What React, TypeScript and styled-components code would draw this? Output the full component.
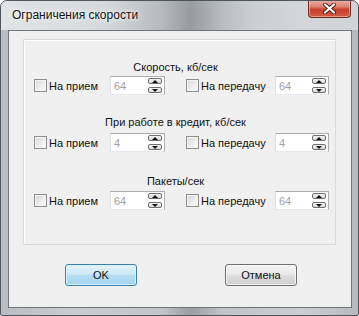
import styled, { createGlobalStyle } from "styled-components";

const GlobalStyle = createGlobalStyle`
  html, body {
    margin: 0;
    padding: 0;
    background: #ffffff;
  }
  body {
    font-family: "Liberation Sans", Arial, sans-serif;
  }
`;

const Window = styled.div`
  width: 359px;
  height: 316px;
  box-sizing: border-box;
  display: flex;
  flex-direction: column;
  border: 1px solid #4f555c;
  border-radius: 7px 7px 2px 2px;
  background: linear-gradient(
    90deg,
    #b9bdc1 0%,
    #c9ccd0 20%,
    #c2c5c9 45%,
    #9a9ea2 53%,
    #c0c3c7 62%,
    #cbced2 85%,
    #b6babe 100%
  );
  overflow: hidden;
`;

const TitleBar = styled.div`
  height: 29px;
  flex-shrink: 0;
  display: flex;
  align-items: flex-start;
  justify-content: space-between;
  background: linear-gradient(
    90deg,
    rgba(235, 238, 241, 0.8) 0%,
    rgba(222, 225, 228, 0.6) 30%,
    rgba(150, 154, 158, 0.6) 53%,
    rgba(210, 213, 216, 0.5) 70%,
    rgba(226, 229, 232, 0.6) 100%
  );
`;

const Title = styled.div`
  font-family: "Liberation Sans", Arial, sans-serif;
  font-size: 12px;
  color: #111;
  padding: 7px 0 0 11px;
  text-shadow: 0 0 6px #ffffff, 0 0 3px #ffffff;
`;

const CloseButton = styled.div`
  width: 43px;
  height: 18px;
  margin-right: 7px;
  margin-top: -1px;
  box-sizing: border-box;
  border: 1px solid #6e2a20;
  border-top: none;
  border-radius: 0 0 4px 4px;
  background: linear-gradient(
    180deg,
    #eab0a2 0%,
    #dc8070 40%,
    #c8412c 55%,
    #cf5a3e 100%
  );
  box-shadow: inset 0 0 0 1px rgba(255, 220, 210, 0.5);
  display: flex;
  align-items: center;
  justify-content: center;
`;

const Client = styled.div`
  flex: 1;
  margin: 0 6px 7px 7px;
  border: 1px solid #6f757b;
  background: #f0f0f0;
  display: flex;
  flex-direction: column;
`;

const Group = styled.div`
  margin: 8px 15px 0 14px;
  height: 206px;
  box-sizing: border-box;
  border: 1px solid #d9dcdf;
  box-shadow: inset 1px 1px 0 #ffffff;
  display: flex;
  flex-direction: column;
`;

const Section = styled.div<{ $top: number; $gap: number }>`
  margin-top: ${(p) => p.$top}px;
  display: flex;
  flex-direction: column;
  gap: ${(p) => p.$gap}px;
`;

const Heading = styled.div`
  font-size: 11px;
  line-height: 15px;
  color: #111;
  text-align: center;
  padding-right: 8px;
`;

const Row = styled.div`
  display: grid;
  grid-template-columns: 15px 61px 55px 21px 15px 74px 54px;
  align-items: center;
  padding-left: 10px;
  height: 19px;
`;

const Check = styled.div`
  width: 13px;
  height: 13px;
  box-sizing: border-box;
  border: 1px solid #8e8f8f;
  background: linear-gradient(135deg, #d7d7d7 0%, #eeeeee 55%, #ffffff 100%);
  box-shadow: inset 0 0 0 1px #f4f4f4;
`;

const Label = styled.div`
  font-size: 11px;
  color: #111;
  white-space: nowrap;
`;

const Spin = styled.div`
  height: 19px;
  box-sizing: border-box;
  border: 1px solid #abadb3;
  border-left-color: #dbdfe6;
  border-bottom-color: #e3e9ef;
  background: #ffffff;
  display: flex;
  align-items: center;
  justify-content: space-between;
  padding: 0 2px 0 3px;
`;

const SpinValue = styled.span`
  font-size: 11px;
  color: #a0a0a0;
`;

const Arrows = styled.div`
  display: flex;
  flex-direction: column;
  gap: 3px;
`;

const ArrowBtn = styled.div`
  width: 14px;
  height: 6px;
  box-sizing: border-box;
  border: 1px solid #6f6f6f;
  border-radius: 2px;
  background: linear-gradient(180deg, #f5f5f5, #d6d6d6);
  display: flex;
  align-items: center;
  justify-content: center;
`;

const Buttons = styled.div`
  display: flex;
  gap: 88px;
  padding: 19px 0 0 56px;
`;

const Button = styled.div<{ $primary?: boolean }>`
  width: 72px;
  height: 22px;
  box-sizing: border-box;
  border: 1px solid ${(p) => (p.$primary ? "#3c7fb1" : "#707070")};
  border-radius: 3px;
  background: ${(p) =>
    p.$primary
      ? "linear-gradient(180deg, #e3f4fc 0%, #cde9f7 45%, #b3dcf2 55%, #a6d5ef 100%)"
      : "linear-gradient(180deg, #f2f2f2 0%, #ebebeb 45%, #dddddd 55%, #cfcfcf 100%)"};
  box-shadow: inset 0 0 0 1px
    ${(p) => (p.$primary ? "rgba(220,245,255,0.9)" : "rgba(255,255,255,0.7)")};
  font-size: 11px;
  color: #111;
  display: flex;
  align-items: center;
  justify-content: center;
`;

const Arrow = ({ up }: { up?: boolean }) => (
  <svg width="6" height="3" viewBox="0 0 6 3">
    <path d={up ? "M0 3 L3 0 L6 3 Z" : "M0 0 L3 3 L6 0 Z"} fill="#111" />
  </svg>
);

const SpinBox = ({ value }: { value: string }) => (
  <Spin>
    <SpinValue>{value}</SpinValue>
    <Arrows>
      <ArrowBtn>
        <Arrow up />
      </ArrowBtn>
      <ArrowBtn>
        <Arrow />
      </ArrowBtn>
    </Arrows>
  </Spin>
);

const LimitRow = ({ value }: { value: string }) => (
  <Row>
    <Check />
    <Label>На прием</Label>
    <SpinBox value={value} />
    <span />
    <Check />
    <Label>На передачу</Label>
    <SpinBox value={value} />
  </Row>
);

const sections = [
  { title: "Скорость, кб/сек", value: "64", top: 20, gap: 1 },
  { title: "При работе в кредит, кб/сек", value: "4", top: 20, gap: 3 },
  { title: "Пакеты/сек", value: "64", top: 22, gap: 2 },
];

export default function App() {
  return (
    <>
      <GlobalStyle />
      <Window>
        <TitleBar>
          <Title>Ограничения скорости</Title>
          <CloseButton>
            <svg width="13" height="11" viewBox="0 0 13 11">
              <path
                d="M2 1.5 L11 9.5 M11 1.5 L2 9.5"
                stroke="#4a1c14"
                strokeWidth="4"
                strokeLinecap="round"
              />
              <path
                d="M2 1.5 L11 9.5 M11 1.5 L2 9.5"
                stroke="#ffffff"
                strokeWidth="2.2"
                strokeLinecap="round"
              />
            </svg>
          </CloseButton>
        </TitleBar>
        <Client>
          <Group>
            {sections.map((s) => (
              <Section key={s.title} $top={s.top} $gap={s.gap}>
                <Heading>{s.title}</Heading>
                <LimitRow value={s.value} />
              </Section>
            ))}
          </Group>
          <Buttons>
            <Button $primary>OK</Button>
            <Button>Отмена</Button>
          </Buttons>
        </Client>
      </Window>
    </>
  );
}
